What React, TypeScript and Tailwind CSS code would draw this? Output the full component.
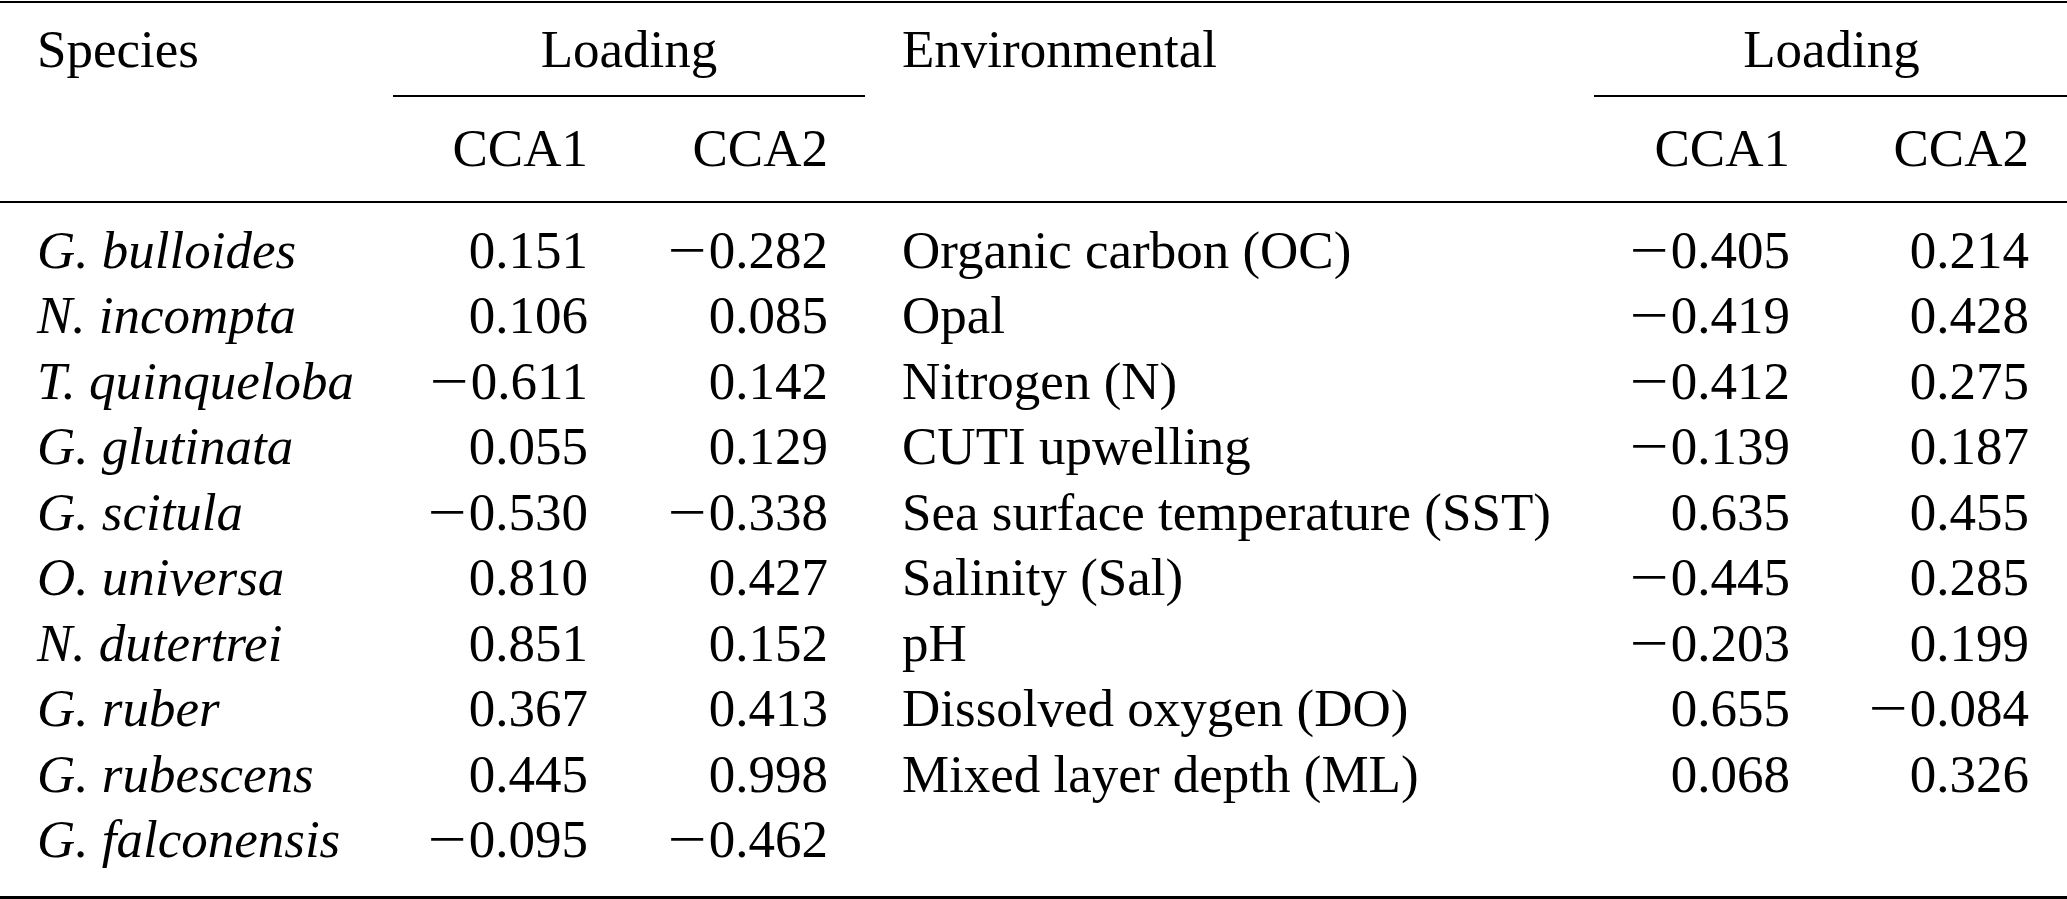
import React from "react";

// CCA loadings table: species on the left, environmental variables on the right
const species = [
  ["G. bulloides", "0.151", "−0.282"],
  ["N. incompta", "0.106", "0.085"],
  ["T. quinqueloba", "−0.611", "0.142"],
  ["G. glutinata", "0.055", "0.129"],
  ["G. scitula", "−0.530", "−0.338"],
  ["O. universa", "0.810", "0.427"],
  ["N. dutertrei", "0.851", "0.152"],
  ["G. ruber", "0.367", "0.413"],
  ["G. rubescens", "0.445", "0.998"],
  ["G. falconensis", "−0.095", "−0.462"],
];

const env = [
  ["Organic carbon (OC)", "−0.405", "0.214"],
  ["Opal", "−0.419", "0.428"],
  ["Nitrogen (N)", "−0.412", "0.275"],
  ["CUTI upwelling", "−0.139", "0.187"],
  ["Sea surface temperature (SST)", "0.635", "0.455"],
  ["Salinity (Sal)", "−0.445", "0.285"],
  ["pH", "−0.203", "0.199"],
  ["Dissolved oxygen (DO)", "0.655", "−0.084"],
  ["Mixed layer depth (ML)", "0.068", "0.326"],
];

const cols = "grid grid-cols-[393px_232px_240px_729px_233px_240px]";

// math minus is wider than the text one, stretch it a bit
function Num({ v }: { v: string }) {
  if (v.startsWith("−")) {
    return (
      <span>
        <span className="inline-block w-[39px] text-right pr-[2px]">
          <span className="inline-block scale-x-[1.3] origin-right">−</span>
        </span>
        {v.slice(1)}
      </span>
    );
  }
  return <span>{v}</span>;
}

export default function App() {
  const rows = Array.from({ length: species.length }, (_, i) => ({
    sp: species[i],
    en: env[i],
  }));

  return (
    <div className="w-[2067px] h-[899px] bg-white text-black font-['Liberation_Serif','Times_New_Roman',serif] text-[53px] leading-[65.5px] overflow-hidden">
      <div className="pt-px">
        <div className="h-[2px] bg-black" />
      </div>

      {/* header row 1 */}
      <div className={`${cols} pt-[13.5px]`}>
        <div className="pl-[37px]">Species</div>
        <div className="col-span-2 text-center">Loading</div>
        <div className="pl-[37px]">Environmental</div>
        <div className="col-span-2 text-center pl-[2px]">Loading</div>
      </div>

      {/* cmidrules */}
      <div className={`${cols} mt-[13px]`}>
        <div />
        <div className="col-span-2 h-[2px] bg-black" />
        <div />
        <div className="col-span-2 h-[2px] bg-black" />
      </div>

      {/* header row 2 */}
      <div className={`${cols} mt-[18.5px]`}>
        <div />
        <div className="text-right pr-[37px]">CCA1</div>
        <div className="text-right pr-[37px]">CCA2</div>
        <div />
        <div className="text-right pr-[37px]">CCA1</div>
        <div className="text-right pr-[38px]">CCA2</div>
      </div>

      <div className="mt-[20px] h-[2px] bg-black" />

      {/* body */}
      <div className={`${cols} auto-rows-[65.5px] mt-[14.5px]`}>
        {rows.map(({ sp, en }) => (
          <React.Fragment key={sp[0]}>
            <div className="pl-[37px] italic whitespace-nowrap">{sp[0]}</div>
            <div className="text-right pr-[37px]">
              <Num v={sp[1]} />
            </div>
            <div className="text-right pr-[37px]">
              <Num v={sp[2]} />
            </div>
            <div className="pl-[37px] whitespace-nowrap">{en ? en[0] : ""}</div>
            <div className="text-right pr-[37px]">{en ? <Num v={en[1]} /> : null}</div>
            <div className="text-right pr-[38px]">{en ? <Num v={en[2]} /> : null}</div>
          </React.Fragment>
        ))}
      </div>

      <div className="mt-[23.5px] h-[3px] bg-black" />
    </div>
  );
}
